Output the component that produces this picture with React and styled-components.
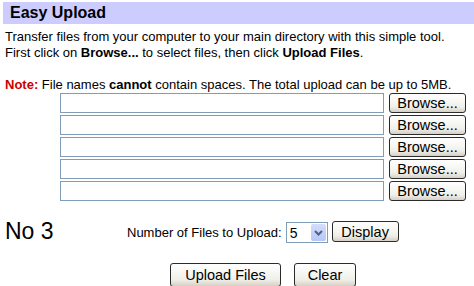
import React, {useState} from 'react'
import styled, {createGlobalStyle} from 'styled-components'

const Global = createGlobalStyle`
body {
    margin: 0;
    background: #FFF;
    font-family: "Liberation Sans", Arial, sans-serif;
    font-size: 13px;
    color: #000;
}
`;

const Page = styled.div`
width: 474px;
height: 286px;
overflow: hidden;
padding: 2px 0 0 3px;
box-sizing: border-box;
`;

const Header = styled.div`
background-color: #CCCCFF;
height: 22px;
display: flex;
align-items: center;
padding-left: 7px;
font-size: 16px;
font-weight: bold;
`;

const Intro = styled.p`
margin: 5px 0 0 2px;
line-height: 16px;
`;

const Note = styled.p`
margin: 16px 0 0 2px;
line-height: 16px;
span {
    color: #CC0000;
    font-weight: bold;
}
`;

const FileList = styled.div`
display: flex;
flex-direction: column;
gap: 2px;
margin: 0 0 0 57px;
`;

const FileRow = styled.div`
display: flex;
align-items: center;
gap: 5px;
`;

const PathBox = styled.div`
width: 322px;
height: 18px;
border: 1px solid #7F9DB9;
background: #FFF;
`;

const Button = styled.button`
font-family: "Liberation Sans", Arial, sans-serif;
font-size: 14.5px;
color: #000;
height: ${props => props.h || 20}px;
width: ${props => props.w}px;
padding: 0;
border: 1px solid #2B2B2B;
border-radius: 3px;
background: linear-gradient(#FFFFFF, #F0F0EA 70%, #D6D0C5);
cursor: pointer;
`;

const DisplayButton = styled(Button)`
margin-bottom: 2px;
`;

const Controls = styled.div`
display: flex;
align-items: flex-end;
margin-top: 17px;
`;

const Big = styled.div`
font-size: 23px;
width: 122px;
padding-left: 2px;
line-height: 26px;
`;

const Picker = styled.div`
display: flex;
align-items: center;
gap: 4px;
`;

const Select = styled.div`
width: 42px;
height: 21px;
border: 1px solid #7F9DB9;
display: flex;
align-items: center;
justify-content: space-between;
padding-left: 3px;
box-sizing: border-box;
font-size: 14px;
`;

const Arrow = styled.div`
width: 15px;
height: 17px;
margin-right: 1px;
background: linear-gradient(#D4DDFB, #B6C6F6);
border-radius: 2px;
display: flex;
align-items: center;
justify-content: center;
`;

const Actions = styled.div`
display: flex;
gap: 13px;
margin: 19px 0 0 167px;
`;

const files = [0, 1, 2, 3, 4];

const App = () => {
    const [count] = useState(5);
    return <Page>
        <Global />
        <Header>Easy Upload</Header>
        <Intro>
            Transfer files from your computer to your main directory with this simple tool.<br />
            First click on <b>Browse...</b> to select files, then click <b>Upload Files</b>.
        </Intro>
        <Note><span>Note:</span> File names <b>cannot</b> contain spaces. The total upload can be up to 5MB.</Note>
        <FileList>
            {files.map(i => <FileRow key={i}>
                <PathBox />
                <Button w={77}>Browse...</Button>
            </FileRow>)}
        </FileList>
        <Controls>
            <Big>No 3</Big>
            <Picker>
                <span>Number of Files to Upload:</span>
                <Select>
                    <span>{count}</span>
                    <Arrow>
                        <svg width="9" height="6" viewBox="0 0 9 6">
                            <path d="M1 1 L4.5 4.5 L8 1" stroke="#4D6185" strokeWidth="2" fill="none" />
                        </svg>
                    </Arrow>
                </Select>
                <DisplayButton w={67} h={21}>Display</DisplayButton>
            </Picker>
        </Controls>
        <Actions>
            <Button w={111} h={24}>Upload Files</Button>
            <Button w={62} h={24}>Clear</Button>
        </Actions>
    </Page>
}

export default App;
